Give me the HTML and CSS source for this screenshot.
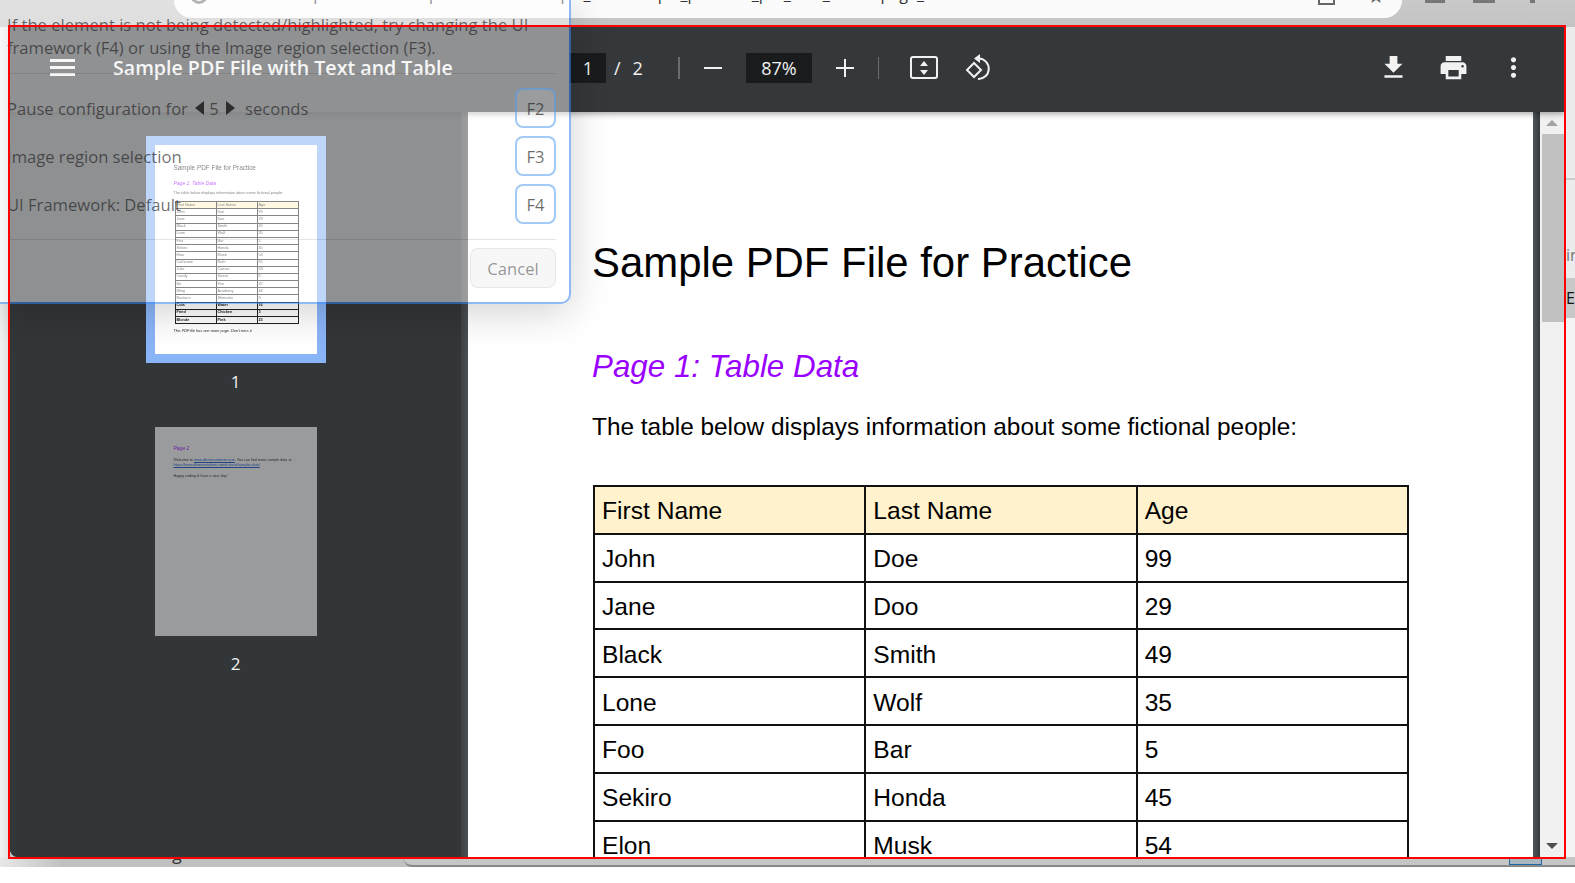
FILE: index.html
```html
<!DOCTYPE html>
<html lang="en">
<head>
  <meta charset="UTF-8">
  <title>Sample PDF File with Text and Table</title>
  <link rel="stylesheet" href="styles.css">
</head>
<body>

<div class="stage">

  <!-- browser bar, mostly cut off at the top -->
  <div class="browser-bar">
    <div class="omnibox">
      <span class="omni-circle"></span>
      <span class="url">https://www.example-files.com/sample_files/sample_pdf/view_pdf_with_tables/page_1/index</span>
      <span class="omni-icon"></span>
      <span class="omni-star">★</span>
    </div>
    <span class="bar-icon bar-icon-a"></span>
    <span class="bar-icon bar-icon-b"></span>
    <span class="bar-icon bar-icon-c"></span>
  </div>

  <div class="middle">
    <div class="side-left"></div>

    <div class="viewer">
      <!-- toolbar -->
      <div class="toolbar">
        <div class="tb-left">
          <svg class="burger" width="25" height="18" viewBox="0 0 25 18"><path d="M0 0h25v3H0zM0 7h25v3H0zM0 14h25v3H0z" fill="#f1f1f1"/></svg>
          <span class="doc-title">Sample PDF File with Text and Table</span>
        </div>
        <span class="field page-field">1</span>
        <span class="slash">/</span>
        <span class="page-count">2</span>
        <span class="divider divider-a"></span>
        <svg class="ic-minus" width="18" height="2" viewBox="0 0 18 2"><path d="M0 0h18v2H0z" fill="#f1f1f1"/></svg>
        <span class="field zoom-field">87%</span>
        <svg class="ic-plus" width="18" height="18" viewBox="0 0 18 18"><path d="M8 0h2v8h8v2h-8v8H8v-8H0V8h8z" fill="#f1f1f1"/></svg>
        <span class="divider divider-b"></span>
        <svg class="ic-fit" width="28" height="24" viewBox="0 0 28 24">
          <rect x="1" y="1" width="26" height="21" rx="2" fill="none" stroke="#f1f1f1" stroke-width="2"/>
          <path d="M14 5l4 5h-8zM14 19l-4-5h8z" fill="#f1f1f1"/>
        </svg>
        <svg class="ic-rotate" width="28" height="28" viewBox="0 0 28 28">
          <path d="M10 9l7 7-7 7-7-7z" fill="none" stroke="#f1f1f1" stroke-width="2"/>
          <path d="M15 4.500A10 10 0 1 1 14 25" fill="none" stroke="#f1f1f1" stroke-width="2"/>
          <path d="M16 0v9l-6-4.500z" fill="#f1f1f1"/>
        </svg>
        <div class="tb-right">
          <svg width="31" height="31" viewBox="0 0 24 24"><path d="M19 9h-4V3H9v6H5l7 7 7-7zM5 18v2h14v-2H5z" fill="#f1f1f1"/></svg>
          <svg width="31" height="31" viewBox="0 0 24 24"><path d="M19 8H5c-1.660 0-3 1.340-3 3v6h4v4h12v-4h4v-6c0-1.660-1.340-3-3-3zm-3 11H8v-5h8v5zm3-7c-.55 0-1-.45-1-1s.45-1 1-1 1 .45 1 1-.45 1-1 1zm-1-9H6v4h12V3z" fill="#f1f1f1"/></svg>
          <svg width="31" height="31" viewBox="0 0 24 24"><path d="M12 8c1.100 0 2-.9 2-2s-.9-2-2-2-2 .9-2 2 .9 2 2 2zm0 2c-1.100 0-2 .9-2 2s.9 2 2 2 2-.9 2-2-.9-2-2-2zm0 6c-1.100 0-2 .9-2 2s.9 2 2 2 2-.9 2-2-.9-2-2-2z" fill="#f1f1f1"/></svg>
        </div>
      </div>

      <div class="viewer-body">
        <!-- thumbnails -->
        <div class="sidebar">
          <div class="thumb selected">
            <div class="mini-page">
              <div class="mini-title">Sample PDF File for Practice</div>
              <div class="mini-heading">Page 1: Table Data</div>
              <div class="mini-text">The table below displays information about some fictional people:</div>
              <table class="mini-table">
                <tr class="head"><td>First Name</td><td>Last Name</td><td>Age</td></tr>
                <tr><td>John</td><td>Doe</td><td>99</td></tr>
                <tr><td>Jane</td><td>Doo</td><td>29</td></tr>
                <tr><td>Black</td><td>Smith</td><td>49</td></tr>
                <tr><td>Lone</td><td>Wolf</td><td>35</td></tr>
                <tr><td>Foo</td><td>Bar</td><td>5</td></tr>
                <tr><td>Sekiro</td><td>Honda</td><td>45</td></tr>
                <tr><td>Elon</td><td>Musk</td><td>54</td></tr>
                <tr><td>Catherine</td><td>Ruth</td><td>55</td></tr>
                <tr><td>Julio</td><td>Caesar</td><td>58</td></tr>
                <tr><td>Candy</td><td>Sweet</td><td>6</td></tr>
                <tr><td>Bo</td><td>Kim</td><td>32</td></tr>
                <tr><td>Bling</td><td>Academy</td><td>44</td></tr>
                <tr><td>Rankers</td><td>Shinsuke</td><td>9</td></tr>
                <tr class="bold"><td>Cola</td><td>Water</td><td>16</td></tr>
                <tr class="bold"><td>Fried</td><td>Chicken</td><td>3</td></tr>
                <tr class="bold"><td>Blonde</td><td>Pink</td><td>23</td></tr>
              </table>
              <div class="mini-note">This PDF file has one more page. Don't miss it.</div>
            </div>
          </div>
          <div class="thumb-label">1</div>

          <div class="thumb second">
            <div class="mini-page">
              <div class="mini-heading dim">Page 2</div>
              <div class="mini-para">Welcome to <u>www.dlsmenutolmm.com</u>. You can find more sample data at <u>https://www.dlsmenutolmm.com/tutorial/sample-data/</u></div>
              <div class="mini-para">Happy coding &amp; have a nice day!</div>
            </div>
          </div>
          <div class="thumb-label">2</div>
        </div>

        <div class="gutter"></div>

        <!-- the pdf page -->
        <div class="page">
          <h1>Sample PDF File for Practice</h1>
          <h2>Page 1: Table Data</h2>
          <p>The table below displays information about some fictional people:</p>
          <table class="people">
            <tr class="head"><td>First Name</td><td>Last Name</td><td>Age</td></tr>
            <tr><td>John</td><td>Doe</td><td>99</td></tr>
            <tr><td>Jane</td><td>Doo</td><td>29</td></tr>
            <tr><td>Black</td><td>Smith</td><td>49</td></tr>
            <tr><td>Lone</td><td>Wolf</td><td>35</td></tr>
            <tr><td>Foo</td><td>Bar</td><td>5</td></tr>
            <tr><td>Sekiro</td><td>Honda</td><td>45</td></tr>
            <tr><td>Elon</td><td>Musk</td><td>54</td></tr>
          </table>
        </div>

        <div class="gutter gutter-right"></div>

        <div class="scrollbar">
          <div class="scroll-btn"><span class="tri-up"></span></div>
          <div class="scroll-thumb"></div>
          <div class="scroll-btn scroll-btn-down"><span class="tri-down"></span></div>
        </div>
      </div>
    </div>

    <div class="side-right">
      <div class="strip strip-a"></div>
      <div class="strip strip-b">in</div>
      <div class="strip strip-c">E</div>
      <div class="strip strip-d"></div>
    </div>
  </div>

  <div class="bottom-row">
    <span class="bottom-text">g</span>
    <div class="bottom-panel"><span class="bottom-box"></span></div>
  </div>

  <!-- red pick frame sits over the dialog too -->
  <div class="pick-frame"></div>

  <!-- see-through config dialog -->
  <div class="dialog">
    <div class="dlg-text">
      If the element is not being detected/highlighted, try changing the UI<br>
      framework (F4) or using the Image region selection (F3).
    </div>
    <div class="dlg-sep dlg-sep-a"></div>
    <div class="dlg-rows">
      <div class="dlg-row">
        <span class="pause">Pause configuration for <i class="arrow-l"></i>5<i class="arrow-r"></i> seconds</span>
        <span class="key">F2</span>
      </div>
      <div class="dlg-row">
        <span>Image region selection</span>
        <span class="key">F3</span>
      </div>
      <div class="dlg-row">
        <span>UI Framework: Default</span>
        <span class="key">F4</span>
      </div>
    </div>
    <div class="dlg-sep dlg-sep-b"></div>
    <div class="dlg-actions"><button class="cancel">Cancel</button></div>
  </div>

</div>

</body>
</html>
```

FILE: styles.css
```css
* {
  margin: 0;
  padding: 0;
  box-sizing: border-box;
}

body {
  width: 1575px;
  height: 883px;
  overflow: hidden;
  background: white;
  font-family: "Open Sans", "Noto Sans", sans-serif;
}

.stage {
  position: relative;
  height: 867px;
  display: flex;
  flex-direction: column;
  overflow: hidden;
  background: #c4c4c4;
}

/* browser bar */
.browser-bar {
  height: 27px;
  flex: none;
  display: flex;
  background: linear-gradient(#c9c9c9, #c3c3c3);
}

.omnibox {
  width: 1228px;
  height: 18px;
  margin-left: 174px;
  padding-left: 16px;
  border-radius: 0 0 18px 18px;
  background: #fbfbfb;
  display: flex;
  overflow: hidden;
  position: relative;
}

.omni-circle {
  width: 18px;
  height: 18px;
  flex: none;
  margin-top: -14px;
  border: 3px solid #777;
  border-radius: 50%;
}

.url {
  margin: -16px 0 0 84px;
  font-size: 16px;
  line-height: 20px;
  color: #333;
  white-space: nowrap;
  width: 1011px;
  flex: none;
  overflow: hidden;
}

.omni-icon {
  width: 17px;
  height: 18px;
  flex: none;
  margin-top: -13px;
  margin-left: 15px;
  border: 2px solid #666;
}

.omni-star {
  margin-top: -13px;
  margin-left: 32px;
  font-size: 20px;
  line-height: 18px;
  color: #666;
}

.bar-icon {
  height: 4px;
  margin-top: -1px;
  background: #777;
}

.bar-icon-a {
  width: 20px;
  margin-left: 23px;
}

.bar-icon-b {
  width: 22px;
  margin-left: 28px;
}

.bar-icon-c {
  width: 5px;
  margin-left: 35px;
}

/* middle row */
.middle {
  display: flex;
  height: 830px;
  flex: none;
}

.side-left {
  width: 10px;
  background: linear-gradient(90deg, #f2f2f2, #dedede);
}

.side-right {
  width: 11px;
  padding-left: 2px;
  display: flex;
  flex-direction: column;
  background: #f2f2f2;
}

.strip-a {
  height: 153px;
  background: #ececec;
  border-bottom: 2px solid #ccc;
}

.strip-b {
  height: 98px;
  padding-top: 65px;
  font-size: 16px;
  line-height: 20px;
  color: #777;
  background: #ececec;
  overflow: hidden;
}

.strip-c {
  height: 40px;
  padding-top: 10px;
  font-size: 16px;
  line-height: 20px;
  color: #111;
  background: #c8c8c8;
}

.strip-d {
  flex: 1;
  background: #f3f3f3;
}

/* viewer */
.viewer {
  width: 1554px;
  height: 830px;
  display: flex;
  flex-direction: column;
  background: #323639;
  border-bottom-left-radius: 8px;
  overflow: hidden;
}

.toolbar {
  height: 85px;
  flex: none;
  padding-bottom: 4px;
  position: relative;
  z-index: 1;
  display: flex;
  align-items: center;
  color: #f1f1f1;
  background: #35383b;
  box-shadow: 0 2px 6px rgba(0, 0, 0, 0.35);
}

.tb-left {
  width: 560px;
  padding-left: 40px;
  display: flex;
  align-items: center;
}

.doc-title {
  margin-left: 38px;
  font-size: 19.600px;
  font-weight: 600;
  white-space: nowrap;
}

.field {
  height: 30px;
  display: flex;
  align-items: center;
  justify-content: center;
  background: #191b1c;
  font-size: 18px;
}

.page-field {
  width: 36px;
}

.slash {
  margin-left: 8px;
  font-size: 18px;
}

.page-count {
  margin-left: 12px;
  font-size: 18px;
}

.divider {
  height: 22px;
  background: #6a6d70;
}

.divider-a {
  width: 2px;
  margin-left: 35px;
}

.divider-b {
  width: 1px;
  margin-left: 24px;
}

.ic-minus {
  margin-left: 24px;
}

.zoom-field {
  width: 66px;
  margin-left: 24px;
}

.ic-plus {
  margin-left: 24px;
}

.ic-fit {
  margin-left: 31px;
}

.ic-rotate {
  margin-left: 26px;
}

.tb-right {
  margin-left: auto;
  padding-right: 35px;
  display: flex;
  gap: 29px;
}

.viewer-body {
  flex: 1;
  min-height: 0;
  display: flex;
}

/* thumbnails */
.sidebar {
  width: 451px;
  flex: none;
  padding-top: 24px;
  display: flex;
  flex-direction: column;
  align-items: center;
  color: #f1f1f1;
  background: #323639;
}

.thumb {
  padding: 9px;
}

.thumb.selected {
  background: #8ab4f8;
}

.thumb.second {
  margin-top: 26px;
}

.thumb.second .mini-page {
  opacity: 0.5;
}

.thumb-label {
  height: 20px;
  margin-top: 9px;
  font-size: 17px;
  line-height: 20px;
}

.mini-page {
  width: 162px;
  height: 209px;
  padding: 18px 19px 0;
  overflow: hidden;
  background: white;
  color: #222;
  font-family: "Liberation Sans", Arial, sans-serif;
  filter: blur(0.35px);
}

.mini-title {
  font-size: 6.400px;
  line-height: 10px;
  white-space: nowrap;
}

.mini-heading {
  margin-top: 7px;
  font-size: 5px;
  line-height: 6px;
  font-style: italic;
  color: #9900ff;
  white-space: nowrap;
}

.mini-heading.dim {
  margin-top: 0;
}

.mini-text {
  margin-top: 5px;
  font-size: 3.800px;
  line-height: 5px;
  white-space: nowrap;
}

.mini-table {
  width: 124px;
  height: 123px;
  margin: 5px 0 0 1px;
  border-collapse: collapse;
  table-layout: fixed;
  font-size: 3.800px;
  line-height: 5px;
}

.mini-table td {
  padding: 0 1px;
  border: 1px solid #222;
  height: 7.200px;
}

.mini-table .head td {
  background: #fff2cc;
}

.mini-table .bold td {
  font-weight: bold;
}

.mini-note {
  margin-top: 5px;
  font-size: 3.800px;
  line-height: 5px;
  font-style: italic;
  white-space: nowrap;
}

.mini-para {
  margin-top: 7px;
  font-size: 3.700px;
  line-height: 5px;
}

.mini-para + .mini-para {
  margin-top: 6px;
}

.mini-para u {
  color: #1155cc;
}

.gutter {
  width: 7px;
  flex: none;
  background: linear-gradient(90deg, #3f4245, #4c4f52);
}

.gutter-right {
  background: linear-gradient(90deg, #525659, #36393c);
}

/* pdf page */
.page {
  width: 1065px;
  flex: none;
  padding: 126px 0 0 124px;
  overflow: hidden;
  background: white;
  color: black;
  font-family: "Liberation Sans", Arial, sans-serif;
}

.page h1 {
  font-size: 41.900px;
  font-weight: normal;
  line-height: 50px;
  white-space: nowrap;
}

.page h2 {
  margin-top: 59px;
  font-size: 31.350px;
  font-weight: normal;
  font-style: italic;
  line-height: 40px;
  color: #9900ff;
}

.page p {
  margin-top: 25px;
  font-size: 24.400px;
  line-height: 30px;
}

.people {
  width: 816px;
  margin: 43px 0 0 1px;
  border-collapse: collapse;
  table-layout: fixed;
  font-size: 24.600px;
}

.people td {
  height: 47.800px;
  padding: 3px 7px 0;
  border: 2px solid #111;
}

.people .head td {
  background: #fff2cc;
}

/* scrollbar */
.scrollbar {
  flex: 1;
  display: flex;
  flex-direction: column;
  background: #f1f1f1;
}

.scroll-btn {
  height: 22px;
  flex: none;
  display: flex;
  align-items: center;
  justify-content: center;
}

.scroll-btn-down {
  margin-top: auto;
}

.tri-up {
  border: 6px solid transparent;
  border-top: 0;
  border-bottom: 6px solid #a3a3a3;
}

.tri-down {
  border: 6px solid transparent;
  border-bottom: 0;
  border-top: 6px solid #505050;
}

.scroll-thumb {
  height: 188px;
  margin-left: 2px;
  background: #c1c1c1;
}

/* bottom */
.bottom-row {
  flex: 1;
  display: flex;
  background: linear-gradient(90deg, #e8e8e8, #c0c0c0 4%);
  overflow: hidden;
}

.bottom-text {
  margin: -14px 0 0 172px;
  font-size: 18px;
  line-height: 20px;
  color: #333;
}

.bottom-panel {
  flex: 1;
  margin: 0 0 0 222px;
  padding-left: 1105px;
  background: #c6c6c6;
  border-bottom: 2px solid #888;
  border-bottom-left-radius: 8px;
}

.bottom-box {
  display: block;
  width: 33px;
  height: 8px;
  background: #a9b6bf;
  border: 1px solid #1f6aa5;
  border-top: 0;
}

/* overlays */
.pick-frame {
  position: absolute;
  left: 8px;
  top: 25px;
  width: 1558px;
  height: 834px;
  border: 2px solid #f00;
  z-index: 3;
  pointer-events: none;
}

.dialog {
  position: absolute;
  left: 0;
  top: 0;
  width: 571px;
  padding: 13px 13px 14px 7px;
  z-index: 2;
  color: rgba(30, 30, 30, 0.66);
  font-size: 16.600px;
  background: rgba(255, 255, 255, 0.45);
  background-clip: padding-box;
  border-right: 2px solid rgba(50, 130, 240, 0.55);
  border-bottom: 2px solid rgba(50, 130, 240, 0.55);
  border-bottom-right-radius: 10px;
  box-shadow: 0 8px 40px rgba(0, 0, 0, 0.18);
}

.dlg-text {
  line-height: 23px;
  white-space: nowrap;
}

.dlg-sep {
  height: 1px;
  margin-left: 3px;
  background: rgba(0, 0, 0, 0.1);
}

.dlg-sep-a {
  margin-top: 14px;
}

.dlg-sep-b {
  margin-top: 15px;
}

.dlg-rows {
  margin-top: 14px;
  display: flex;
  flex-direction: column;
  gap: 8px;
}

.dlg-row {
  height: 40px;
  display: flex;
  align-items: center;
  justify-content: space-between;
}

.pause {
  display: flex;
  align-items: center;
  white-space: pre;
}

.arrow-l,
.arrow-r {
  border: 7px solid transparent;
}

.arrow-l {
  margin: 0 5px 0 3px;
  border-left: 0;
  border-right: 9px solid rgba(20, 20, 20, 0.8);
}

.arrow-r {
  margin: 0 6px 0 7px;
  border-right: 0;
  border-left: 9px solid rgba(20, 20, 20, 0.8);
}

.key {
  width: 41px;
  height: 40px;
  display: flex;
  align-items: center;
  justify-content: center;
  border: 2px solid rgba(70, 150, 240, 0.5);
  border-radius: 8px;
  background: rgba(255, 255, 255, 0.1);
}

.dlg-actions {
  margin-top: 8px;
  display: flex;
  justify-content: flex-end;
}

.cancel {
  width: 86px;
  height: 40px;
  font-family: inherit;
  font-size: 16.600px;
  color: rgba(0, 0, 0, 0.42);
  background: rgba(235, 235, 235, 0.4);
  border: 1px solid rgba(0, 0, 0, 0.06);
  border-radius: 8px;
}
```
